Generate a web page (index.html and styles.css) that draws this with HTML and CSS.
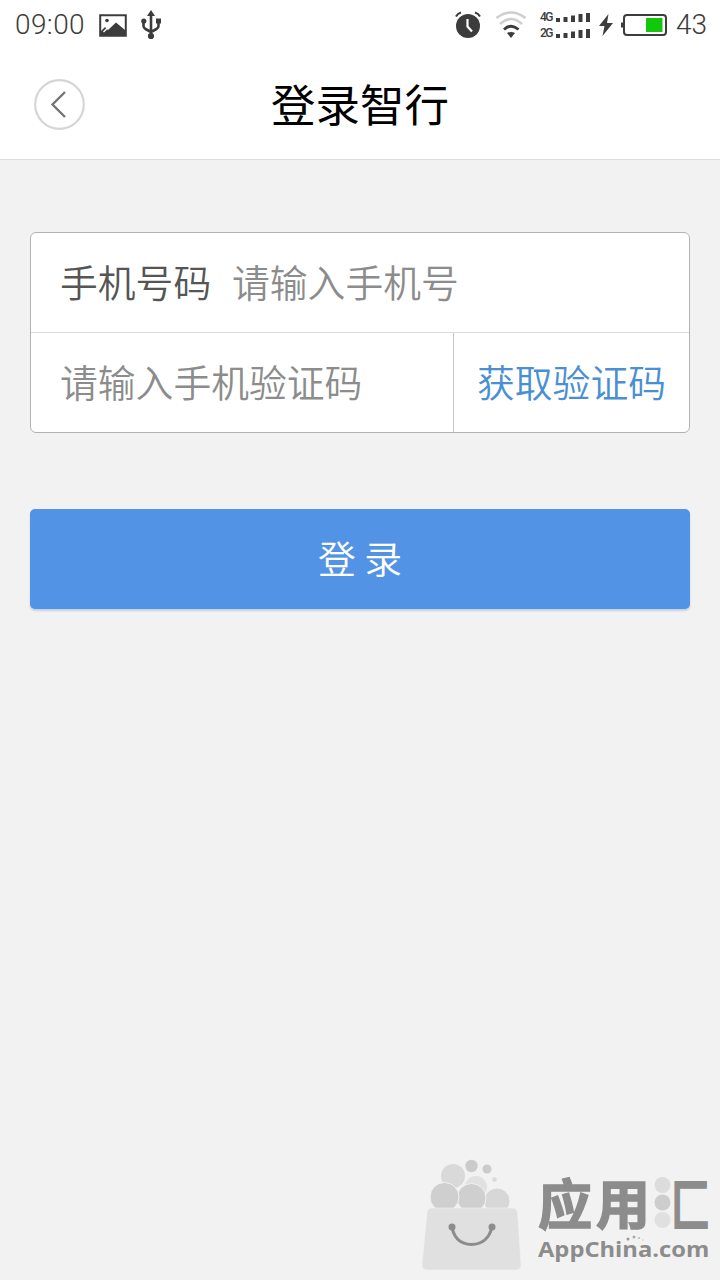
FILE: index.html
```html
<!DOCTYPE html>
<html lang="zh-CN">
<head>
<meta charset="UTF-8">
<meta name="viewport" content="width=device-width, initial-scale=1.0">
<title>登录智行</title>
<link rel="stylesheet" href="styles.css">
</head>
<body>

<div class="status-bar">
  <span class="time">09:00</span>
  <svg class="icon-picture" width="28" height="23" viewBox="0 0 28 23">
    <path d="M1.2 1.2h25.6v20.6H1.2z" fill="#fff" stroke="#3c3c3c" stroke-width="2"/>
    <path d="M2 21v-4l4-4 3 3 8-7.500 9 7.500V21z" fill="#3c3c3c"/>
    <circle cx="8" cy="6.500" r="1.800" fill="#3c3c3c"/>
    <path d="M4.500 18l4-4" stroke="#fff" stroke-width="1.500"/>
  </svg>
  <svg class="icon-usb" width="20" height="30" viewBox="0 0 20 30">
    <path d="M10 5v20M10 22l-5.500-3q-2-1-2-3V11M10 22l5.500-3q2-1 2-3V11" fill="none" stroke="#3c3c3c" stroke-width="2.600"/>
    <path d="M10 0l4 6H6z" fill="#3c3c3c"/>
    <circle cx="2.800" cy="11" r="2.600" fill="#3c3c3c"/>
    <path d="M15 8.500h5v5h-5z" fill="#3c3c3c"/>
    <circle cx="10" cy="26" r="3.100" fill="#3c3c3c"/>
  </svg>

  <div class="status-right">
    <svg width="26" height="28" viewBox="0 0 26 28">
      <circle cx="13" cy="15" r="12" fill="#3c3c3c"/>
      <path d="M1 5.500Q2.500 2.500 6 1.500M20 1.500q3.500 1 5 4" fill="none" stroke="#3c3c3c" stroke-width="2"/>
      <path d="M12.500 8v7.500l4.500 5" fill="none" stroke="#fff" stroke-width="2.200"/>
    </svg>
    <svg class="icon-wifi" width="32" height="28" viewBox="0 0 32 28">
      <path d="M1.500 7Q16-4 30.500 7" fill="none" stroke="#cfcfcf" stroke-width="2.600"/>
      <path d="M5 13Q16 3 27 13" fill="none" stroke="#cfcfcf" stroke-width="2.600"/>
      <path d="M9 18.500q7-6.500 14.500 0" fill="none" stroke="#3c3c3c" stroke-width="2.800"/>
      <path d="M12 22q4-2 8 0L16 27z" fill="#3c3c3c"/>
    </svg>
    <div class="signals">
      <div class="signal">
        <span>4G</span>
        <svg width="34" height="11" viewBox="0 0 34 11">
          <path d="M0 6h4v4H0zM7.500 5h4v5h-4zM15 3.500h4V10h-4zM22.500 2h4v8h-4zM30 1h4v9h-4z" fill="#3c3c3c"/>
        </svg>
      </div>
      <div class="signal">
        <span>2G</span>
        <svg width="34" height="11" viewBox="0 0 34 11">
          <path d="M0 6h4v4H0zM7.500 5h4v5h-4zM15 3.500h4V10h-4zM22.500 2h4v8h-4zM30 1h4v9h-4z" fill="#3c3c3c"/>
        </svg>
      </div>
    </div>
    <svg class="icon-bolt" width="14" height="22" viewBox="0 0 14 22">
      <path d="M9.500 0L0 12h5.500L3.500 22 14 9H8z" fill="#3c3c3c"/>
    </svg>
    <svg class="icon-battery" width="46" height="22" viewBox="0 0 46 22">
      <rect x="3" y="1" width="42" height="20" rx="3" fill="#fff" stroke="#3c3c3c" stroke-width="2"/>
      <path d="M0 8.500h2v5H0z" fill="#3c3c3c"/>
      <path d="M25 4h16.500v14H25z" fill="#12c70c"/>
    </svg>
    <span class="level">43</span>
  </div>
</div>

<header>
  <a href="#" class="back">
    <svg width="51" height="51" viewBox="0 0 51 51">
      <circle cx="25.500" cy="25.500" r="24.300" fill="#fff" stroke="#d6d6d6" stroke-width="2.200"/>
      <path d="M31 13L18.500 25.500 31 38" fill="none" stroke="#757575" stroke-width="2.400"/>
    </svg>
  </a>
  <h1>登录智行</h1>
</header>

<main>
  <div class="form">
    <div class="row">
      <span class="label">手机号码</span>
      <span class="placeholder">请输入手机号</span>
    </div>
    <div class="row">
      <span class="placeholder code">请输入手机验证码</span>
      <a href="#" class="get-code">获取验证码</a>
    </div>
  </div>
  <button class="login">登 录</button>
</main>

<footer>
  <svg class="bag" width="100" height="112" viewBox="0 0 100 112">
    <circle cx="31" cy="17" r="12" fill="#d9d9d9"/>
    <circle cx="49.500" cy="7" r="6.200" fill="#cbcbcb"/>
    <circle cx="65" cy="10" r="4.500" fill="#cbcbcb"/>
    <circle cx="72.500" cy="20.500" r="2.300" fill="#d9d9d9"/>
    <circle cx="54" cy="28" r="11" fill="#e1e1e1"/>
    <circle cx="75" cy="42" r="13" fill="#d7d7d7" stroke="#f2f2f2"/>
    <circle cx="49.500" cy="39" r="14.500" fill="#cfcfcf" stroke="#f2f2f2"/>
    <circle cx="22.500" cy="38" r="14.500" fill="#cfcfcf" stroke="#f2f2f2"/>
    <path d="M10 49h80q5 0 5.600 5l3.400 51q.5 6-5.500 6H6q-6.500 0-6-6L5 54q.5-5 5-5z" fill="#e0e0e0" stroke="#f2f2f2" stroke-width=".6"/>
    <path d="M30 68q3 17 19.500 17.500Q66 85 70 68" fill="none" stroke="#8c8c8c" stroke-width="3"/>
    <circle cx="30" cy="68" r="3.500" fill="#8c8c8c"/>
    <circle cx="70" cy="68" r="3.500" fill="#8c8c8c"/>
  </svg>
  <div class="brand">
    <div class="brand-name">
      <span class="brand-text">应用</span>
      <svg class="dots" width="17" height="54" viewBox="0 0 17 54">
        <circle cx="8.500" cy="9" r="8" fill="#dcdcdc"/>
        <circle cx="8.500" cy="26.500" r="8" fill="#cdcdcd"/>
        <circle cx="8.500" cy="44" r="8" fill="#e0e0e0"/>
      </svg>
      <span class="brand-end">匚</span>
    </div>
    <div class="brand-url">AppChina.com</div>
    <svg class="spark" width="18" height="6" viewBox="0 0 18 6">
      <circle cx="2" cy="4" r="1.500" fill="#999"/>
      <circle cx="8" cy="2" r="1.500" fill="#aaa"/>
      <circle cx="13" cy="3" r="1.100" fill="#bbb"/>
      <circle cx="17" cy="5" r=".8" fill="#ccc"/>
    </svg>
  </div>
</footer>

</body>
</html>
```

FILE: styles.css
```css
* {
  box-sizing: border-box;
}

body {
  margin: 0;
  height: 1280px;
  display: flex;
  flex-direction: column;
  background-color: #f2f2f2;
  font-family: 'Noto Sans CJK SC', sans-serif;
  font-weight: 350;
  overflow: hidden;
}

svg {
  display: block;
  flex: none;
}

.status-bar {
  display: flex;
  align-items: center;
  height: 50px;
  padding: 0 13px 0 15px;
  background-color: #fff;
  color: #3c3c3c;
  font-family: Roboto, sans-serif;
  font-size: 28px;
  font-weight: 300;
  line-height: 50px;
}

.time {
  width: 84px;
  letter-spacing: 0.4px;
}

.icon-usb {
  margin-left: 14px;
}

.status-right {
  display: flex;
  align-items: center;
  margin-left: auto;
}

.icon-wifi {
  margin-left: 14px;
}

.signals {
  margin-left: 13px;
}

.signal {
  display: flex;
  align-items: center;
  height: 16px;
  font-size: 12px;
  font-weight: 500;
  line-height: 16px;
}

.signal span {
  width: 16px;
  letter-spacing: -1.5px;
}

.icon-bolt {
  margin-left: 9px;
}

.icon-battery {
  margin-left: 8px;
}

.level {
  margin-left: 9px;
}

header {
  display: flex;
  align-items: center;
  height: 110px;
  padding: 0 34px;
  background-color: #fff;
  border-bottom: 1px solid #dedede;
}

h1 {
  flex: 1;
  margin: 0 51px 4px 0;
  color: #000;
  font-size: 44.5px;
  font-weight: 400;
  line-height: 104px;
  text-align: center;
}

main {
  padding: 72px 30px 0;
}

.form {
  background-color: #fff;
  border: 1px solid #b2b2b2;
  border-radius: 6px;
  font-size: 37.8px;
}

.row {
  display: flex;
  height: 99px;
  padding-left: 29px;
  line-height: 95px;
}

.row + .row {
  height: 100px;
  border-top: 1px solid #dcdcdc;
}

.label {
  width: 172px;
  color: #555;
}

.placeholder {
  color: #8c8c8c;
}

.code {
  flex: 1;
}

.get-code {
  width: 236px;
  border-left: 1px solid #c8c8c8;
  color: #4a8fd3;
  text-align: center;
  text-decoration: none;
}

.login {
  display: block;
  width: 100%;
  height: 100px;
  margin-top: 76px;
  padding: 0 0 5px;
  border: none;
  border-radius: 5px;
  background-color: #5393e5;
  box-shadow: 0 2px 2px #c3d2df;
  color: #fff;
  font-family: inherit;
  font-size: 37.8px;
  font-weight: 350;
}

/* Логотип магазина внизу */
footer {
  display: flex;
  margin-top: auto;
  padding: 0 0 9px 422px;
}

.brand {
  position: relative;
  margin-left: 16px;
  padding-top: 15px;
  color: #8c8c8c;
}

.brand-name {
  display: flex;
  height: 61px;
  font-size: 54px;
  font-weight: 700;
  line-height: 56px;
  -webkit-text-stroke: 1.5px #8c8c8c;
}

.brand-text {
  width: 116px;
  letter-spacing: 4px;
  white-space: nowrap;
}

.dots {
  margin-top: 2px;
}

.brand-end {
  width: 38px;
  font-size: 56px;
  transform: scaleX(0.7);
  transform-origin: left;
}

.brand-url {
  width: 154px;
  font-family: 'Open Sans', sans-serif;
  font-size: 21px;
  font-weight: 700;
  line-height: 28px;
  white-space: nowrap;
  transform: scaleX(1.13);
  transform-origin: left;
}

.spark {
  position: absolute;
  left: 88px;
  top: 76px;
}
```
